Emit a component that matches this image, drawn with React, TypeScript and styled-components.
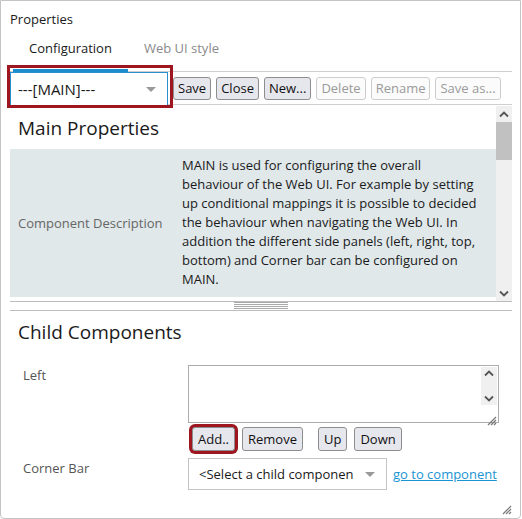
import React from 'react';
import styled, { createGlobalStyle } from 'styled-components';

const GlobalStyle = createGlobalStyle`
  html, body {
    margin: 0;
    padding: 0;
    background: #fff;
  }
  body {
    font-family: 'Open Sans', 'Noto Sans', sans-serif;
    color: #1a1a1a;
  }
`;

const Panel = styled.div`
  position: relative;
  box-sizing: border-box;
  width: 521px;
  height: 519px;
  padding: 0 8px 0 9px;
  border: 1px solid #c4c4c4;
  border-radius: 0 0 4px 4px;
  display: flex;
  flex-direction: column;
`;

const Title = styled.div`
  padding-top: 9px;
  font-size: 13px;
  line-height: 18px;
  color: #1a1a1a;
`;

const TabBar = styled.div`
  display: flex;
  padding-left: 3px;
  border-bottom: 1px solid #cfcfcf;
`;

const Tab = styled.div<{ $active?: boolean }>`
  padding: 11px 16px 12px;
  margin-bottom: -1px;
  font-size: 13px;
  line-height: 18px;
  color: ${(p) => (p.$active ? '#1a1a1a' : '#8a8a8a')};
  border-bottom: 3px solid ${(p) => (p.$active ? '#1b8ccc' : 'transparent')};
`;

const Toolbar = styled.div`
  display: flex;
  align-items: flex-start;
  gap: 5px;
  height: 32px;
  border-bottom: 1px solid #cfcfcf;
`;

const Highlight = styled.div<{ $t: number; $r: number; $b: number; $l: number }>`
  position: relative;
  &::after {
    content: '';
    position: absolute;
    top: ${(p) => -p.$t}px;
    right: ${(p) => -p.$r}px;
    bottom: ${(p) => -p.$b}px;
    left: ${(p) => -p.$l}px;
    border: 3px solid #9e1620;
    pointer-events: none;
  }
`;

const Select = styled.div<{ $w: number; $h: number; $focus?: boolean; $size?: number }>`
  box-sizing: border-box;
  display: flex;
  align-items: center;
  justify-content: space-between;
  width: ${(p) => p.$w}px;
  height: ${(p) => p.$h}px;
  padding: 0 11px 0 ${(p) => (p.$focus ? 7 : 10)}px;
  border: 1px solid ${(p) => (p.$focus ? '#2790d0' : '#c4c4c4')};
  background: #fff;
  font-size: ${(p) => p.$size ?? 15}px;
  color: #1a1a1a;
  white-space: nowrap;
  overflow: hidden;
`;

const Caret = styled.span`
  flex: none;
  width: 0;
  height: 0;
  margin-left: 8px;
  border-left: 5px solid transparent;
  border-right: 5px solid transparent;
  border-top: 5px solid #999;
`;

const ToolButton = styled.button`
  box-sizing: border-box;
  height: 23px;
  margin-top: 5px;
  padding: 0 4px;
  font-family: inherit;
  font-size: 13px;
  line-height: 1;
  color: #111;
  background: #e6e6ed;
  border: 1px solid #8e8e8e;
  border-radius: 3px;
  &:disabled {
    color: #9a9a9a;
    background: #fbfbfb;
    border-color: #cdcdcd;
  }
`;

const ScrollArea = styled.div`
  display: flex;
  height: 195px;
  border-bottom: 1px solid #bdbdbd;
  margin-top: 1px;
`;

const ScrollContent = styled.div`
  flex: 1;
  overflow: hidden;
`;

const Heading = styled.div`
  padding: 9px 8px 8px;
  font-size: 19px;
  line-height: 26px;
  color: #1a1a1a;
`;

const SubHeading = styled(Heading)`
  padding-top: 8px;
`;

const PropRow = styled.div`
  display: grid;
  grid-template-columns: 172px 1fr;
  background: #e0e8ea;
  padding: 7px 0 8px;
`;

const PropLabel = styled.div`
  align-self: center;
  padding-left: 8px;
  font-size: 13px;
  color: #666;
`;

const PropValue = styled.div`
  font-size: 13px;
  line-height: 19px;
  color: #1a1a1a;
  white-space: nowrap;
`;

const ScrollTrack = styled.div`
  width: 16px;
  background: #f0f0f0;
  display: flex;
  flex-direction: column;
  align-items: center;
`;

const ScrollArrow = styled.div`
  height: 16px;
  width: 16px;
  display: flex;
  align-items: center;
  justify-content: center;
`;

const Thumb = styled.div`
  width: 16px;
  height: 38px;
  background: #c1c1c1;
`;

const Spacer = styled.div`
  flex: 1;
`;

const Splitter = styled.div`
  display: flex;
  justify-content: center;
  height: 8px;
  border-bottom: 1px solid #bdbdbd;
`;

const Grip = styled.div`
  width: 54px;
  height: 7px;
  background: repeating-linear-gradient(to bottom, #a9a9a9 0 1px, transparent 1px 2px);
`;

const FormGrid = styled.div`
  display: grid;
  grid-template-columns: 165px 311px;
  padding: 12px 0 0 13px;
  row-gap: 7px;
`;

const FieldLabel = styled.div`
  padding-top: 1px;
  font-size: 13px;
  line-height: 18px;
  color: #555;
`;

const CornerLabel = styled(FieldLabel)`
  padding-top: 1px;
`;

const ListBox = styled.div`
  position: relative;
  box-sizing: border-box;
  height: 58px;
  border: 1px solid #adadad;
  display: flex;
  justify-content: flex-end;
  padding: 1px;
`;

const ListScroll = styled.div`
  box-sizing: border-box;
  width: 16px;
  height: 38px;
  padding: 3px 0;
  background: #f0f0f0;
  display: flex;
  flex-direction: column;
  justify-content: space-between;
  align-items: center;
`;

const ResizeCorner = styled.div`
  position: absolute;
  right: 1px;
  bottom: 1px;
  width: 12px;
  height: 12px;
`;

const ButtonRow = styled.div`
  display: flex;
  align-items: center;
  margin-top: 4px;
`;

const RowButton = styled(ToolButton)<{ $gap: number; $mark?: boolean }>`
  margin-top: 0;
  margin-left: ${(p) => p.$gap}px;
  height: 24px;
  padding: 0 5px;
  font-size: 13px;
  ${(p) => (p.$mark ? 'box-shadow: 0 0 0 3px #9e1620;' : '')}
`;

const CornerRow = styled.div`
  display: flex;
  align-items: center;
  gap: 6px;
`;

const Link = styled.a`
  font-size: 13px;
  color: #1a94d2;
  text-decoration: underline;
  white-space: nowrap;
`;

const Chevron = ({ up, color = '#555' }: { up?: boolean; color?: string }) => (
  <svg width="10" height="7" viewBox="0 0 10 7">
    <path
      d={up ? 'M1 5.5 L5 1.5 L9 5.5' : 'M1 1.5 L5 5.5 L9 1.5'}
      fill="none"
      stroke={color}
      strokeWidth="1.8"
    />
  </svg>
);

const ResizeLines = () => (
  <svg width="12" height="12" viewBox="0 0 12 12">
    <path d="M11 3 L3 11 M11 6 L6 11 M11 9 L9 11" stroke="#777" strokeWidth="1.2" />
  </svg>
);

const PanelGrip = styled.div`
  position: absolute;
  right: 8px;
  bottom: 8px;
  width: 12px;
  height: 12px;
`;

const description = [
  'MAIN is used for configuring the overall',
  'behaviour of the Web UI. For example by setting',
  'up conditional mappings it is possible to decided',
  'the behaviour when navigating the Web UI. In',
  'addition the different side panels (left, right, top,',
  'bottom) and Corner bar can be configured on',
  'MAIN.',
];

const App = () => {
  return (
    <>
      <GlobalStyle />
      <Panel>
        <Title>Properties</Title>
        <TabBar>
          <Tab $active>Configuration</Tab>
          <Tab>Web UI style</Tab>
        </TabBar>

        <Toolbar>
          <Highlight $t={7} $r={5} $b={4} $l={3}>
            <Select $w={158} $h={34} $focus style={{ marginBottom: -2 }}>
              ---[MAIN]---
              <Caret />
            </Select>
          </Highlight>
          <ToolButton>Save</ToolButton>
          <ToolButton>Close</ToolButton>
          <ToolButton>New...</ToolButton>
          <ToolButton disabled>Delete</ToolButton>
          <ToolButton disabled>Rename</ToolButton>
          <ToolButton disabled>Save as...</ToolButton>
        </Toolbar>

        <ScrollArea>
          <ScrollContent>
            <Heading>Main Properties</Heading>
            <PropRow>
              <PropLabel>Component Description</PropLabel>
              <PropValue>
                {description.map((line, i) => (
                  <div key={i}>{line}</div>
                ))}
              </PropValue>
            </PropRow>
          </ScrollContent>
          <ScrollTrack>
            <ScrollArrow>
              <Chevron up />
            </ScrollArrow>
            <Thumb />
            <Spacer />
            <ScrollArrow>
              <Chevron />
            </ScrollArrow>
          </ScrollTrack>
        </ScrollArea>

        <Splitter>
          <Grip />
        </Splitter>

        <SubHeading>Child Components</SubHeading>

        <FormGrid>
          <FieldLabel>Left</FieldLabel>
          <div>
            <ListBox>
              <ListScroll>
                <Chevron up />
                <Chevron />
              </ListScroll>
              <ResizeCorner>
                <ResizeLines />
              </ResizeCorner>
            </ListBox>
            <ButtonRow>
              <RowButton $gap={4} $mark>
                Add..
              </RowButton>
              <RowButton $gap={7}>Remove</RowButton>
              <RowButton $gap={15}>Up</RowButton>
              <RowButton $gap={7}>Down</RowButton>
            </ButtonRow>
          </div>

          <CornerLabel>Corner Bar</CornerLabel>
          <CornerRow>
            <Select $w={199} $h={32} $size={13}>
              &lt;Select a child componen
              <Caret />
            </Select>
            <Link href="#">go to component</Link>
          </CornerRow>
        </FormGrid>

        <PanelGrip>
          <ResizeLines />
        </PanelGrip>
      </Panel>
    </>
  );
};

export default App;
